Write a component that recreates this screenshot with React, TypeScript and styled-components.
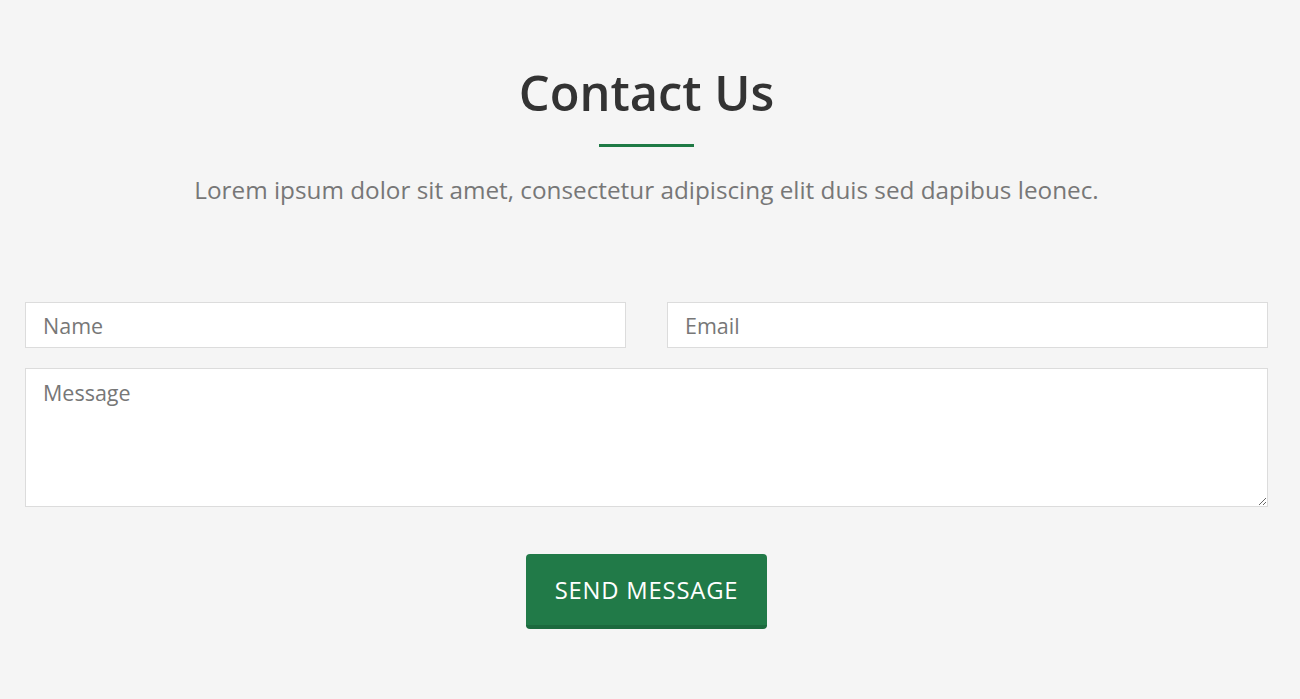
import React from "react";
import styled, { createGlobalStyle } from "styled-components";

const Global = createGlobalStyle`
  html, body { margin: 0; padding: 0; background: #f5f5f5; }
  body { font-family: "Open Sans", "Noto Sans", sans-serif; }
  * { box-sizing: border-box; }
`;

const Section = styled.section`
  padding: 58px 32px 70px 25px;
  display: flex;
  flex-direction: column;
  align-items: center;
`;

const Title = styled.h2`
  margin: 0;
  font-size: 48.8px;
  font-weight: 600;
  color: #333;
  line-height: 68px;
`;

const Rule = styled.div`
  width: 95px;
  height: 3px;
  background: #1f7a45;
  margin-top: 18px;
`;

const Lead = styled.p`
  margin: 26px 0 0;
  font-size: 24.3px;
  color: #777;
  line-height: 34px;
`;

const Form = styled.form`
  width: 100%;
  margin-top: 95px;
  display: flex;
  flex-direction: column;
  gap: 20px;
  align-items: center;
`;

const Row = styled.div`
  width: 100%;
  display: grid;
  grid-template-columns: 1fr 1fr;
  gap: 41px;
`;

const fieldBase = `
  width: 100%;
  border: 1px solid #dcdcdc;
  background: #fff;
  font-family: "Open Sans", "Noto Sans", sans-serif;
  font-size: 21.5px;
  color: #555;
  padding: 0 17px;
  outline: none;
  border-radius: 0;
  &::placeholder { color: #777; }
`;

const Input = styled.input`
  ${fieldBase}
  height: 46px;
`;

const TextArea = styled.textarea`
  ${fieldBase}
  height: 139px;
  padding-top: 9px;
  display: block;
  resize: vertical;
`;

const Button = styled.button`
  margin-top: 27px;
  width: 241px;
  height: 75px;
  background: #217a48;
  border: none;
  border-bottom: 4px solid #1c6a3e;
  border-radius: 4px;
  color: #fff;
  font-family: "Open Sans", "Noto Sans", sans-serif;
  font-size: 23.8px;
  letter-spacing: 0.8px;
  text-transform: uppercase;
  padding: 0;
  cursor: pointer;
`;

export default function App() {
  return (
    <>
      <Global />
      <Section>
        <Title>Contact Us</Title>
        <Rule />
        <Lead>Lorem ipsum dolor sit amet, consectetur adipiscing elit duis sed dapibus leonec.</Lead>
        <Form onSubmit={(e) => e.preventDefault()}>
          <Row>
            <Input placeholder="Name" />
            <Input placeholder="Email" />
          </Row>
          <TextArea placeholder="Message" />
          <Button type="submit">Send Message</Button>
        </Form>
      </Section>
    </>
  );
}
